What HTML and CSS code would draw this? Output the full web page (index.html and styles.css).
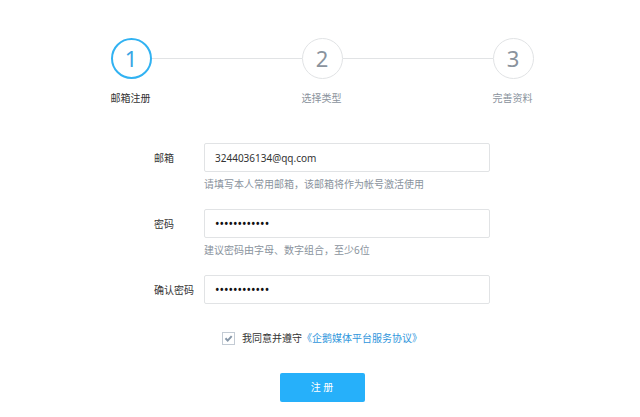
FILE: index.html
```html
<!DOCTYPE html>
<html lang="zh-CN">
<head>
<meta charset="utf-8">
<meta name="viewport" content="width=device-width, initial-scale=1">
<title>邮箱注册</title>
<link rel="stylesheet" href="styles.css">
</head>
<body>
<main class="page">
  <ol class="steps">
    <li class="step step-active">
      <div class="step-track"><span class="step-number">1</span></div>
      <span class="step-label">邮箱注册</span>
    </li>
    <li class="step">
      <div class="step-track"><span class="step-number">2</span></div>
      <span class="step-label">选择类型</span>
    </li>
    <li class="step">
      <div class="step-track"><span class="step-number">3</span></div>
      <span class="step-label">完善资料</span>
    </li>
  </ol>
  <form class="form">
    <div class="field">
      <label class="field-label" for="email">邮箱</label>
      <input class="field-input" id="email" type="text" value="3244036134@qq.com">
      <p class="field-hint">请填写本人常用邮箱，该邮箱将作为帐号激活使用</p>
    </div>
    <div class="field">
      <label class="field-label" for="password">密码</label>
      <input class="field-input field-password" id="password" type="password" value="abcdef123456">
      <p class="field-hint">建议密码由字母、数字组合，至少6位</p>
    </div>
    <div class="field">
      <label class="field-label" for="confirm">确认密码</label>
      <input class="field-input field-password" id="confirm" type="password" value="abcdef123456">
    </div>
    <div class="agreement">
      <span class="check">
        <input class="check-box" id="agree" type="checkbox" checked>
        <svg class="check-mark" viewBox="0 0 13 13" aria-hidden="true"><path d="M3.5 6.3 5.7 8.6 9.7 4.2"/></svg>
      </span>
      <label for="agree">我同意并遵守</label>
      <a class="agreement-link" href="#">《企鹅媒体平台服务协议》</a>
    </div>
    <button class="submit" type="submit">注 册</button>
  </form>
</main>
</body>
</html>
```
FILE: styles.css
```css
* {
  box-sizing: border-box;
}

body {
  margin: 0;
  background: #fff;
  color: #333;
  font: 10px/14px "Noto Sans", "Noto Sans CJK SC", sans-serif;
}

.page {
  padding: 38px 16px 15px 20px;
}

.steps {
  display: flex;
  max-width: 423px;
  margin: 0 auto;
  padding: 0;
  list-style: none;
}

.step {
  flex: 1;
  color: #8a939d;
}

.step:last-child {
  flex: none;
}

.step-track {
  display: flex;
  align-items: center;
  margin-bottom: 12px;
}

.step:not(:last-child) .step-track::after {
  content: "";
  flex: 1;
  height: 1px;
  background: #e1e3e5;
}

.step-number {
  display: flex;
  align-items: center;
  justify-content: center;
  width: 41px;
  height: 41px;
  padding-bottom: 2px;
  border: 1px solid #e1e3e5;
  border-radius: 50%;
  font-size: 22px;
}

.step-active {
  color: #333;
}

.step-active .step-number {
  border: 2px solid #31b2f2;
  color: #38a5e4;
}

.step-label {
  display: block;
}

.form {
  display: flex;
  flex-direction: column;
  max-width: 336px;
  margin: 38px auto 0;
}

.field {
  display: grid;
  grid-template-columns: 50px 1fr;
  align-items: center;
  row-gap: 5px;
  margin-bottom: 18px;
}

.field-input {
  width: 100%;
  height: 29px;
  padding: 0 10px;
  border: 1px solid #e1e3e5;
  border-radius: 2px;
  background: #fff;
  color: #333;
  font: inherit;
}

.field-password {
  color: #111;
  font-size: 12px;
}

.field-hint {
  grid-column: 2;
  margin: 0;
  color: #8a939d;
}

.agreement {
  display: flex;
  align-items: center;
  align-self: center;
  margin: 9px 0 28px;
}

.check {
  display: grid;
  margin-right: 7px;
}

.check-box,
.check-mark {
  grid-area: 1 / 1;
  width: 13px;
  height: 13px;
}

.check-box {
  appearance: none;
  margin: 0;
  border: 1px solid #c3cbd4;
  background: #fff;
}

.check-mark {
  z-index: 1;
  fill: none;
  stroke: #8797a8;
  stroke-width: 2;
  pointer-events: none;
}

.agreement-link {
  color: #2f96dc;
  text-decoration: none;
}

.submit {
  align-self: center;
  width: 85px;
  height: 29px;
  padding: 0 0 2px;
  border: 0;
  border-radius: 2px;
  background: #26b0fa;
  color: #fff;
  font: inherit;
}
```
